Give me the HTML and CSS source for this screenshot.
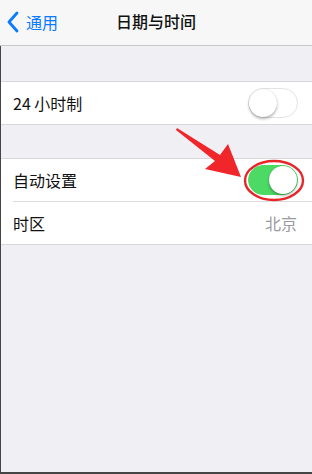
FILE: index.html
```html
<!DOCTYPE html>
<html>
<head>
<meta charset="utf-8">
<link rel="stylesheet" href="styles.css">
</head>
<body>
<div class="screen">
  <header class="nav">
    <div class="back">
      <svg class="chev" width="12" height="22" viewBox="0 0 12 22"><path d="M10 2 L2 11 L10 20" fill="none" stroke="#0a7aff" stroke-width="2.8" stroke-linecap="round" stroke-linejoin="round"/></svg>
      <span>通用</span>
    </div>
    <div class="title">日期与时间</div>
  </header>
  <main class="page">
    <section class="group">
      <div class="row">
        <span class="label">24 小时制</span>
        <span class="switch"><span class="thumb"></span></span>
      </div>
    </section>
    <section class="group">
      <div class="row">
        <span class="label">自动设置</span>
        <span class="switch on"><span class="thumb"></span></span>
      </div>
      <div class="sep"></div>
      <div class="row">
        <span class="label">时区</span>
        <span class="value">北京</span>
      </div>
    </section>
    <svg class="annot" width="312" height="474" viewBox="0 0 312 474">
      <ellipse cx="274" cy="180.5" rx="29" ry="19.5" fill="none" stroke="#e8262a" stroke-width="2.4"/>
      <polygon points="177,128 220,155 228,144 241,177 205,169 215,161 176,130" fill="#f0262b"/>
    </svg>
  </main>
</div>
</body>
</html>
```
FILE: styles.css
```css
* { box-sizing: border-box; }
html, body { margin: 0; padding: 0; }
body {
  width: 312px;
  height: 474px;
  overflow: hidden;
  font-family: "Noto Sans CJK SC", "Noto Sans", sans-serif;
  background: #efeff4;
}
.screen {
  width: 312px;
  height: 474px;
  display: flex;
  flex-direction: column;
}
.nav {
  height: 46px;
  background: #f7f7f8;
  border-bottom: 1px solid #c8c7cc;
  position: relative;
  display: flex;
  align-items: center;
  flex-shrink: 0;
}
.back {
  display: flex;
  align-items: center;
  gap: 7px;
  padding-left: 7px;
  color: #0a7aff;
  font-size: 16px;
  line-height: 20px;
  margin-top: -2px;
}
.chev { display: block; }
.title {
  position: absolute;
  left: 0;
  right: 0;
  top: 0;
  height: 45px;
  display: flex;
  align-items: center;
  justify-content: center;
  font-size: 16px;
  color: #111;
  font-weight: 500;
  margin-top: -2px;
}
.page {
  flex: 1;
  position: relative;
  background: #efeff4;
  border-left: 1px solid #454545;
  border-bottom: 2px solid #454545;
  padding-top: 35px;
  display: flex;
  flex-direction: column;
  gap: 33px;
}
.group {
  background: #fff;
  border-top: 1px solid #d8d7dc;
  border-bottom: 1px solid #d8d7dc;
}
.row {
  height: 42px;
  display: flex;
  align-items: center;
  justify-content: space-between;
  padding-left: 12px;
  padding-right: 14px;
}
.label {
  font-size: 16px;
  color: #111;
}
.value {
  font-size: 16px;
  color: #9a9a9f;
  margin-right: 1px;
}
.sep {
  height: 1px;
  background: #dcdce0;
  margin-left: 12px;
}
.switch {
  width: 50px;
  height: 30px;
  border-radius: 15px;
  border: 1.5px solid #e3e3e6;
  background: #fff;
  position: relative;
  display: flex;
  align-items: center;
  padding: 0;
}
.switch .thumb {
  width: 28px;
  height: 28px;
  border-radius: 50%;
  background: #fff;
  box-shadow: 0 2px 3px rgba(0,0,0,0.28), 0 0 1px rgba(0,0,0,0.2);
}
.switch.on {
  background: #4cd964;
  border-color: #4cd964;
  justify-content: flex-end;
}
.annot {
  position: absolute;
  left: -1px;
  top: -46px;
  pointer-events: none;
}
```
